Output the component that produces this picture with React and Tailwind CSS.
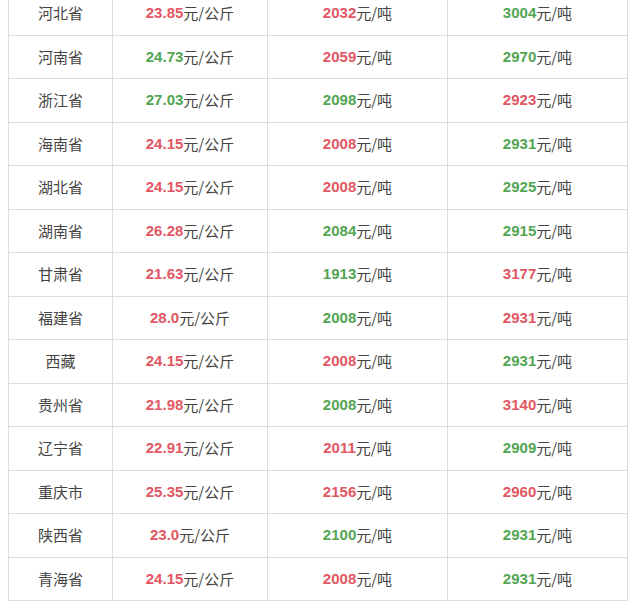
const rows = [
  ["河北省", "23.85", "r", "2032", "r", "3004", "g"],
  ["河南省", "24.73", "g", "2059", "r", "2970", "g"],
  ["浙江省", "27.03", "g", "2098", "g", "2923", "r"],
  ["海南省", "24.15", "r", "2008", "r", "2931", "g"],
  ["湖北省", "24.15", "r", "2008", "r", "2925", "g"],
  ["湖南省", "26.28", "r", "2084", "g", "2915", "g"],
  ["甘肃省", "21.63", "r", "1913", "g", "3177", "r"],
  ["福建省", "28.0", "r", "2008", "g", "2931", "r"],
  ["西藏", "24.15", "r", "2008", "r", "2931", "g"],
  ["贵州省", "21.98", "r", "2008", "g", "3140", "r"],
  ["辽宁省", "22.91", "r", "2011", "r", "2909", "g"],
  ["重庆市", "25.35", "r", "2156", "r", "2960", "r"],
  ["陕西省", "23.0", "r", "2100", "g", "2931", "g"],
  ["青海省", "24.15", "r", "2008", "r", "2931", "g"],
];

const Num = ({ v, c }) => (
  <span
    className={`font-bold font-['Liberation_Sans',Arial,sans-serif] ${
      c === "r" ? "text-[#e25763]" : "text-[#52a552]"
    }`}
  >
    {v}
  </span>
);

export default function App() {
  return (
    <div className="w-[640px] h-[601px] overflow-hidden bg-white">
      <div className="ml-[8px] -mt-[7.6px] w-[620px] border-l border-r border-[#dcdcdc] text-[15px] text-[#444] font-['Noto_Sans_CJK_SC',sans-serif]">
        {rows.map((r) => (
          <div
            key={r[0]}
            className="grid grid-cols-[104px_155px_180px_1fr] h-[43.5px] border-b border-[#dcdcdc]"
          >
            <div className="flex items-center justify-center border-r border-[#dcdcdc]">{r[0]}</div>
            <div className="flex items-center justify-center border-r border-[#dcdcdc]">
              <Num v={r[1]} c={r[2]} />
              元/公斤
            </div>
            <div className="flex items-center justify-center border-r border-[#dcdcdc]">
              <Num v={r[3]} c={r[4]} />
              元/吨
            </div>
            <div className="flex items-center justify-center">
              <Num v={r[5]} c={r[6]} />
              元/吨
            </div>
          </div>
        ))}
      </div>
    </div>
  );
}
